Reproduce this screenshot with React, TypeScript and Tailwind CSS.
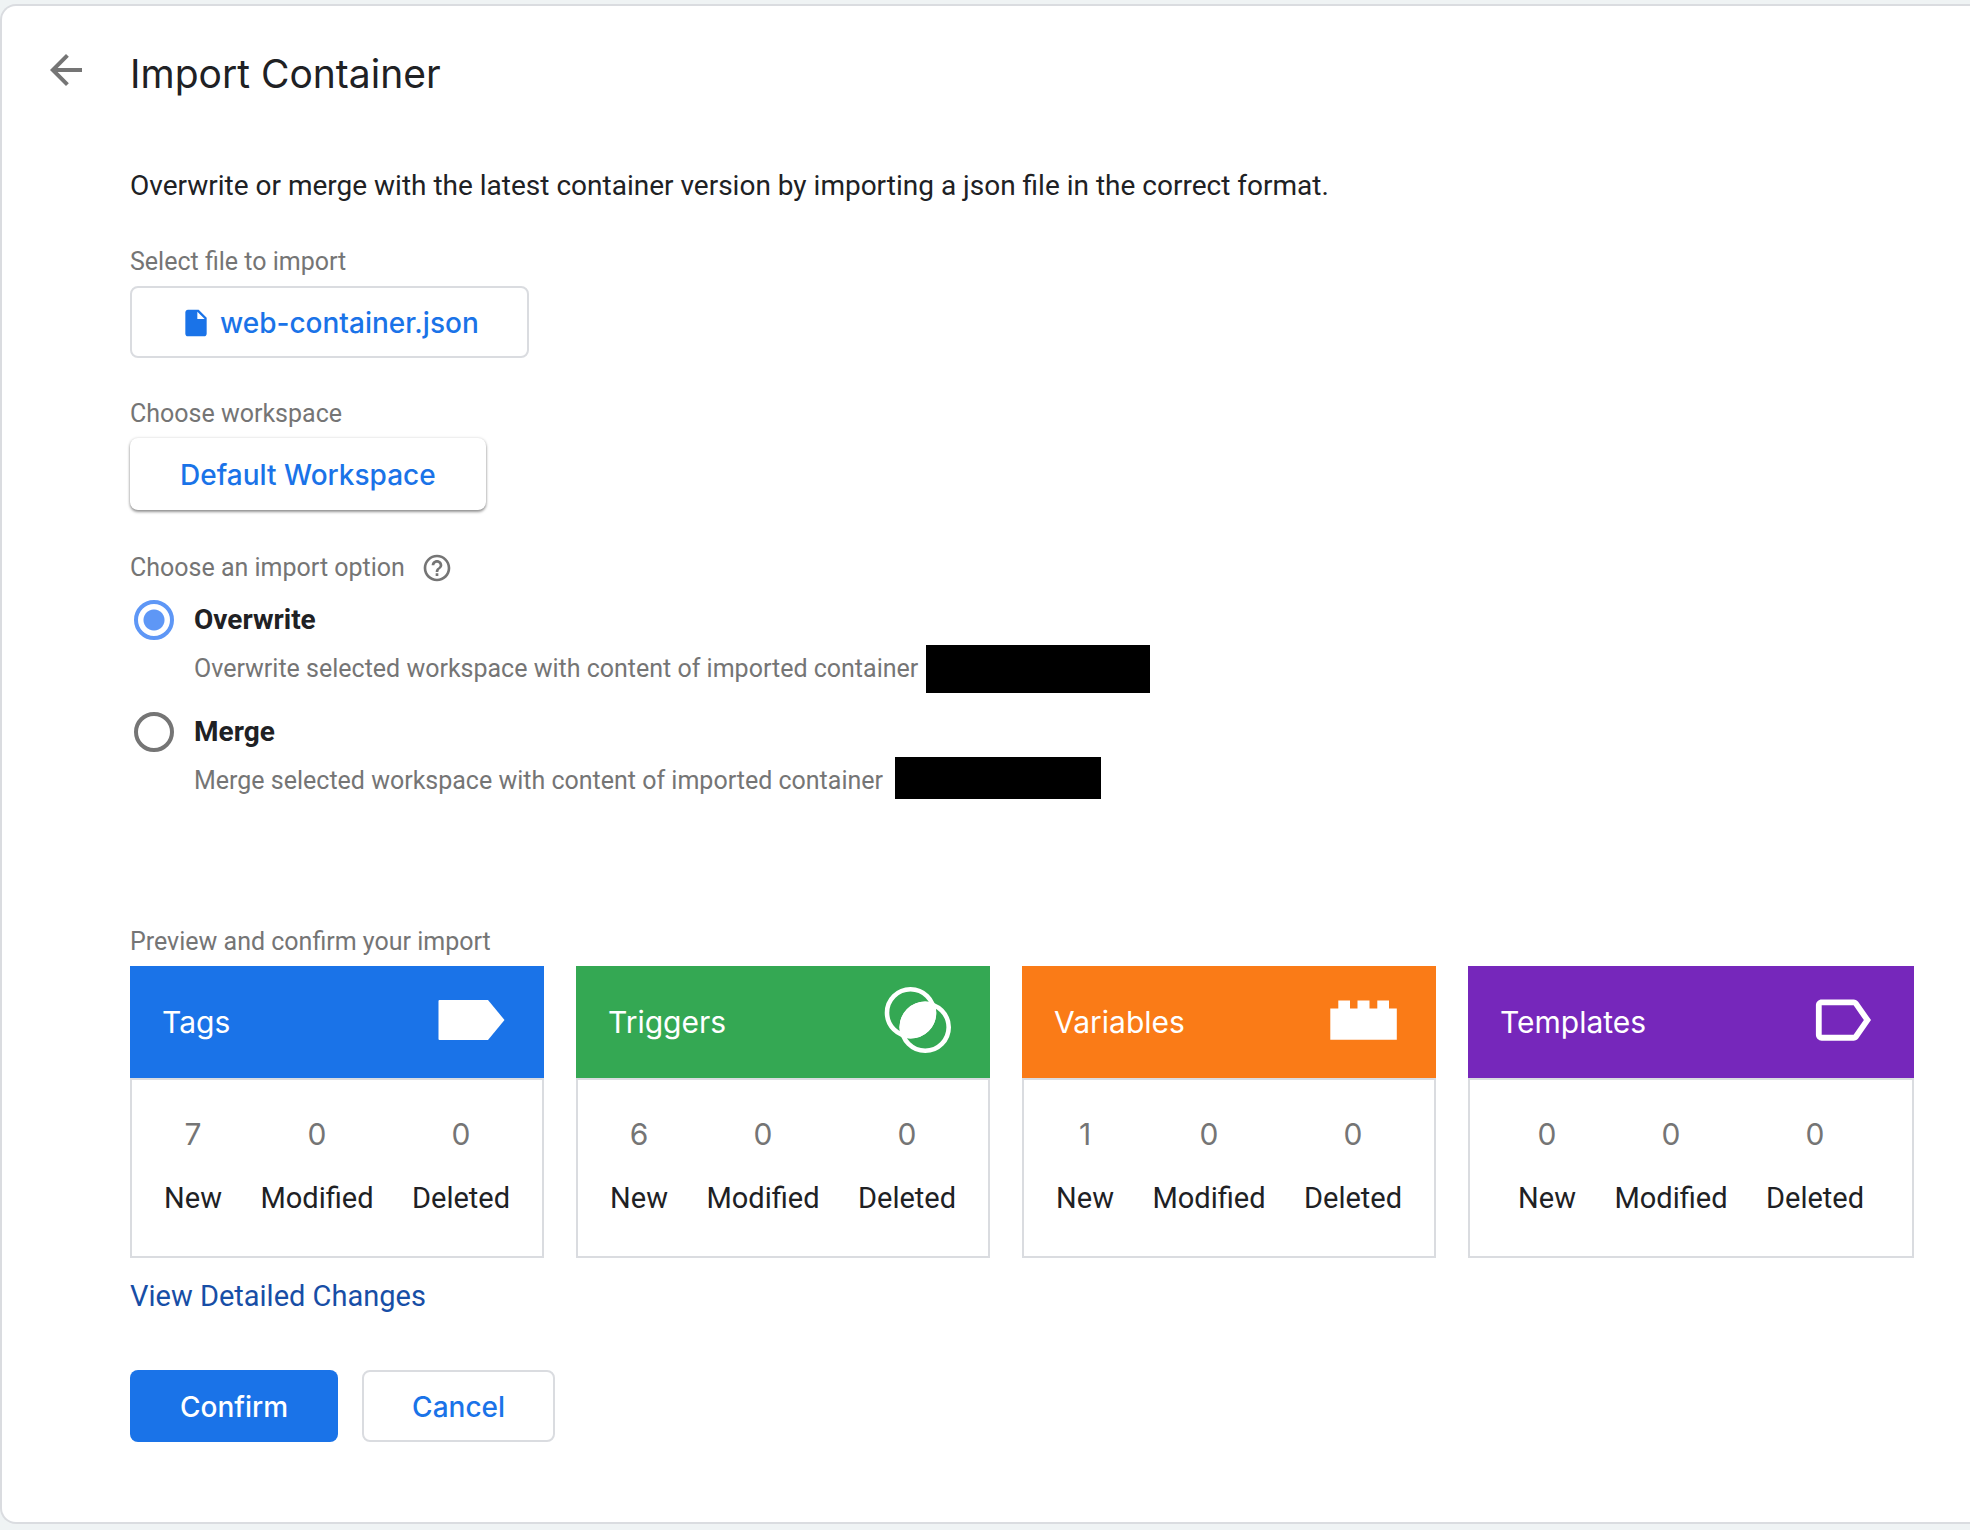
import { useState } from "react";
import type { ReactNode } from "react";

const display = "font-[Inter,'Liberation_Sans',sans-serif]";

function TagIcon() {
  return (
    <svg viewBox="0 0 72 72" className="size-[72px]" fill="currentColor" aria-hidden="true">
      <path d="M3.500 14H52l16.500 20L52 54H3.500a1 1 0 0 1-1-1V15a1 1 0 0 1 1-1z" />
    </svg>
  );
}

function TriggerIcon() {
  return (
    <svg viewBox="0 0 72 72" className="size-[72px]" aria-hidden="true">
      <clipPath id="trigger-lens">
        <circle cx="28.500" cy="26.800" r="25.700" />
      </clipPath>
      <g fill="none" stroke="currentColor" strokeWidth="4.600">
        <circle cx="28.500" cy="26.800" r="23.500" />
        <circle cx="43.200" cy="41.300" r="23.500" />
      </g>
      <circle cx="43.200" cy="41.300" r="25.700" fill="currentColor" clipPath="url(#trigger-lens)" />
    </svg>
  );
}

function VariableIcon() {
  return (
    <svg viewBox="0 0 72 72" className="size-[72px]" fill="currentColor" aria-hidden="true">
      <path d="M2.300 22.400h8v-8h11.700v8h7.500v-8h12v8h7.800v-8H61v8h7.800v31.300H2.300z" />
    </svg>
  );
}

function TemplateIcon() {
  return (
    <svg viewBox="0 0 72 72" className="size-[72px]" fill="currentColor" aria-hidden="true">
      <path
        transform="translate(1.200 -1.300) scale(2.900 2.950)"
        d="M17.630 5.840C17.270 5.330 16.670 5 16 5L5 5.010C3.900 5.010 3 5.900 3 7v10c0 1.100.900 1.990 2 1.990L16 19c.670 0 1.270-.330 1.630-.840L22 12l-4.370-6.160zM16 17H5V7h11l3.550 5L16 17z"
      />
    </svg>
  );
}

type Summary = {
  title: string;
  color: string;
  icon: ReactNode;
  counts: [number, number, number];
};

const summaries: Summary[] = [
  { title: "Tags", color: "bg-[#1a73e8]", icon: <TagIcon />, counts: [7, 0, 0] },
  { title: "Triggers", color: "bg-[#34a853]", icon: <TriggerIcon />, counts: [6, 0, 0] },
  { title: "Variables", color: "bg-[#fa7b17]", icon: <VariableIcon />, counts: [1, 0, 0] },
  { title: "Templates", color: "bg-[#7627bb]", icon: <TemplateIcon />, counts: [0, 0, 0] },
];

function SummaryCard({ title, color, icon, counts }: Summary) {
  return (
    <section className="mr-8 last:mr-0">
      <header className={`flex h-28 items-center justify-between pr-9 pl-8 text-white ${color}`}>
        <h2 className={`text-[30px] leading-10 ${display}`}>{title}</h2>
        {icon}
      </header>
      <div className="flex justify-center border-2 border-[#dadce0] pt-[30px] pb-[34px]">
        <table className="text-center">
          <tbody className="flex flex-col-reverse">
            <tr className="grid grid-cols-[96px_152px_136px] text-[29px] leading-12 text-[#202124]">
              <th scope="col" className="font-normal">New</th>
              <th scope="col" className="font-normal">Modified</th>
              <th scope="col" className="font-normal">Deleted</th>
            </tr>
            <tr className={`grid grid-cols-[96px_152px_136px] pb-4 text-[30px] leading-12 text-[#757575] ${display}`}>
              {counts.map((count, i) => (
                <td key={i}>{count}</td>
              ))}
            </tr>
          </tbody>
        </table>
      </div>
    </section>
  );
}

type OptionProps = {
  value: string;
  title: string;
  description: string;
  checked: boolean;
  onSelect: () => void;
  bar: ReactNode;
};

function ImportOption({ value, title, description, checked, onSelect, bar }: OptionProps) {
  return (
    <div className="flex h-28 gap-5 pl-1">
      <input
        id={value}
        type="radio"
        name="import-option"
        checked={checked}
        onChange={onSelect}
        className="size-10 shrink-0 appearance-none rounded-full border-4 border-[#757575] checked:border-[#5e97f6] checked:bg-[radial-gradient(circle,#5e97f6_10px,transparent_11px)]"
      />
      <div>
        <label htmlFor={value} className="block text-[28px] leading-10 font-bold text-[#202124]">
          {title}
        </label>
        <div className="flex h-[58px] items-center text-[25px] text-[#757575]">
          <p className="whitespace-nowrap">{description}</p>
          {bar}
        </div>
      </div>
    </div>
  );
}

export default function App() {
  const [option, setOption] = useState("overwrite");
  return (
    <div className="flex min-h-screen flex-col bg-[#eff3f4] pt-1 pb-1.5 font-[Roboto,'Liberation_Sans',sans-serif]">
      <main className="flex-1 rounded-l-2xl border-2 border-r-0 border-[#dadce0] bg-white pr-14 pl-10 text-[#202124]">
        <header className="flex items-start gap-10 pt-10">
          <button type="button" aria-label="Back" className="text-[#757575]">
            <svg viewBox="0 0 24 24" className="size-12" fill="currentColor" aria-hidden="true">
              <path d="M20 11H7.830l5.590-5.590L12 4l-8 8 8 8 1.410-1.410L7.830 13H20v-2z" />
            </svg>
          </button>
          <h1 className={`text-[39px] leading-14 ${display}`}>Import Container</h1>
        </header>

        <div className="flex flex-col items-start pt-16 pl-[88px]">
          <p className="text-[28px] leading-10">
            Overwrite or merge with the latest container version by importing a json file in the correct format.
          </p>

          <span id="file-label" className="mt-10 text-[25px] leading-8 text-[#757575]">
            Select file to import
          </span>
          <button
            type="button"
            aria-describedby="file-label"
            className={`mt-2 flex h-18 items-center gap-2 rounded-lg border-2 border-[#dadce0] px-12 pt-0.5 text-[28px] font-medium text-[#1a73e8] ${display}`}
          >
            <svg viewBox="0 0 24 24" className="size-8" fill="currentColor" aria-hidden="true">
              <path d="M6 2c-1.100 0-1.990.900-1.990 2L4 20c0 1.100.890 2 1.990 2H18c1.100 0 2-.900 2-2V8l-6-6H6zm7 7V3.500L18.500 9H13z" />
            </svg>
            web-container.json
          </button>

          <span id="workspace-label" className="mt-10 text-[25px] leading-8 text-[#757575]">
            Choose workspace
          </span>
          <button
            type="button"
            aria-describedby="workspace-label"
            className={`mt-2 h-18 rounded-lg bg-white px-[50px] pt-0.5 text-[28px] font-medium text-[#1a73e8] shadow-[0_2px_3px_rgba(0,0,0,0.4),0_0_3px_rgba(0,0,0,0.15)] ${display}`}
          >
            Default Workspace
          </button>

          <fieldset>
            <legend className="flex items-center gap-4 pt-[42px] pb-4 text-[25px] leading-8 text-[#757575]">
              Choose an import option
              <button type="button" aria-label="Help">
                <svg viewBox="0 0 24 24" className="size-8" fill="currentColor" aria-hidden="true">
                  <path d="M11 18h2v-2h-2v2zm1-16C6.480 2 2 6.480 2 12s4.480 10 10 10 10-4.480 10-10S17.520 2 12 2zm0 18c-4.410 0-8-3.590-8-8s3.590-8 8-8 8 3.590 8 8-3.590 8-8 8zm0-14c-2.210 0-4 1.790-4 4h2c0-1.100.900-2 2-2s2 .900 2 2c0 2-3 1.750-3 5h2c0-2.250 3-2.500 3-5 0-2.210-1.790-4-4-4z" />
                </svg>
              </button>
            </legend>
            <ImportOption
              value="overwrite"
              title="Overwrite"
              description="Overwrite selected workspace with content of imported container"
              checked={option === "overwrite"}
              onSelect={() => setOption("overwrite")}
              bar={<span className="ml-2 h-12 w-56 bg-black" />}
            />
            <ImportOption
              value="merge"
              title="Merge"
              description="Merge selected workspace with content of imported container"
              checked={option === "merge"}
              onSelect={() => setOption("merge")}
              bar={<span className="mb-1.5 ml-3 h-[42px] w-[206px] bg-black" />}
            />
          </fieldset>

          <p className="mt-[102px] text-[25px] leading-8 text-[#757575]">Preview and confirm your import</p>
          <div className="mt-2 grid w-full grid-cols-4">
            {summaries.map((summary) => (
              <SummaryCard key={summary.title} {...summary} />
            ))}
          </div>

          <a href="#changes" className="mt-[18px] text-[29px] leading-10 text-[#174ea6]">
            View Detailed Changes
          </a>
          <div className={`mt-[54px] flex gap-6 text-[28px] font-medium ${display}`}>
            <button type="button" className="h-18 rounded-lg bg-[#1a73e8] px-[50px] pt-0.5 text-white">
              Confirm
            </button>
            <button type="button" className="h-18 rounded-lg border-2 border-[#dadce0] px-12 pt-0.5 text-[#1a73e8]">
              Cancel
            </button>
          </div>
        </div>
      </main>
    </div>
  );
}
